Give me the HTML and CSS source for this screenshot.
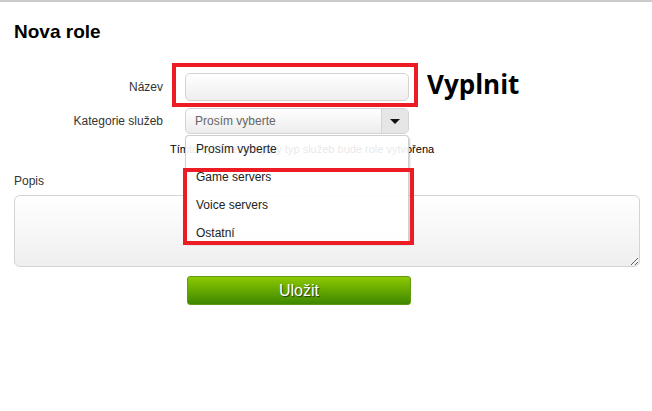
FILE: index.html
```html
<html>
    <head>
        <meta charset="utf-8">
        <link rel="stylesheet" href="styles.css">
    </head>
    <body>
        <div class="page">
            <h1 class="title">Nova role</h1>

            <div class="row row-name">
                <label class="label">Název</label>
                <div class="field">
                    <input type="text" class="input">
                    <div class="mark mark-name"></div>
                </div>
                <b class="note">Vyplnit</b>
            </div>

            <div class="row row-cat">
                <label class="label">Kategorie služeb</label>
                <div class="field">
                    <div class="select">
                        <span class="select-text">Prosím vyberte</span>
                        <span class="select-arrow"><i class="caret"></i></span>
                    </div>
                    <ul class="options">
                        <li>Prosím vyberte</li>
                        <li>Game servers</li>
                        <li>Voice servers</li>
                        <li>Ostatní</li>
                    </ul>
                    <div class="mark mark-list"></div>
                </div>
            </div>

            <p class="hint">Tímto vyberte, pro jaký typ služeb bude role vytvořena</p>

            <label class="label-top">Popis</label>
            <textarea class="textarea"></textarea>

            <div class="actions">
                <button class="btn">Uložit</button>
            </div>
        </div>
    </body>
</html>
```

FILE: styles.css
```css
*{
    box-sizing: border-box;
    font-family: "Liberation Sans", Arial, sans-serif;
}
body{
    margin: 0px;
    border-top: 2px solid #cbcbcb;
    background: #fff;
    color: #333;
    font-size: 12px;
}
.page{
    padding: 0px 12px 0px 14px;
}
.title{
    margin: 19px 0px 0px 0px;
    font-size: 19px;
    line-height: 22px;
    color: #000;
}
.row{
    display: grid;
    grid-template-columns: 149px 224px auto;
    column-gap: 22px;
    align-items: center;
}
.row-name{
    margin-top: 30px;
    height: 28px;
}
.row-cat{
    margin-top: 7px;
    height: 26px;
}
.label{
    text-align: right;
    font-size: 12px;
    color: #333;
}
.field{
    position: relative;
}
.input{
    display: block;
    width: 224px;
    height: 28px;
    border: 1px solid #d4d4d4;
    border-radius: 5px;
    background: linear-gradient(#ffffff, #eeeeee);
}
.note{
    margin-left: -4px;
    margin-top: -6px;
    font-family: "Open Sans", sans-serif;
    font-size: 26px;
    line-height: 28px;
    color: #000;
}
.mark{
    position: absolute;
    border: 4px solid #ed1c24;
}
.mark-name{
    left: -13px;
    right: -9px;
    top: -10px;
    bottom: -6px;
}
.select{
    display: flex;
    height: 26px;
    border: 1px solid #d4d4d4;
    border-radius: 5px;
    background: linear-gradient(#ffffff, #ececec);
    overflow: hidden;
}
.select-text{
    flex: 1;
    padding-left: 9px;
    line-height: 24px;
    color: #666;
}
.select-arrow{
    width: 27px;
    display: flex;
    align-items: center;
    justify-content: center;
    background: #e6e6e6;
    border-left: 1px solid #d4d4d4;
}
.caret{
    width: 0px;
    height: 0px;
    border-left: 5px solid transparent;
    border-right: 5px solid transparent;
    border-top: 5px solid #111;
}
.options{
    position: absolute;
    z-index: 2;
    left: 0px;
    top: 27px;
    width: 224px;
    height: 108px;
    margin: 0px;
    padding: 0px;
    list-style: none;
    overflow: hidden;
    background: rgba(255, 255, 255, 0.9);
    border: 1px solid #cfcfcf;
    border-bottom: none;
    border-radius: 4px 4px 0px 0px;
    box-shadow: 1px 2px 2px rgba(0, 0, 0, 0.2);
}
.options li{
    height: 28px;
    line-height: 28px;
    padding-left: 10px;
    color: #222;
}
.options li:first-child{
    height: 27px;
    line-height: 27px;
}
.mark-list{
    z-index: 3;
    left: -2px;
    width: 231px;
    top: 60px;
    height: 77px;
}
.hint{
    margin: 8px 0px 0px 156px;
    font-size: 11px;
    line-height: 14px;
    white-space: nowrap;
    color: #000;
}
.label-top{
    display: block;
    margin-top: 18px;
    font-size: 12px;
}
.textarea{
    display: block;
    width: 626px;
    height: 72px;
    margin-top: 7px;
    border: 1px solid #d4d4d4;
    border-radius: 6px;
    background: linear-gradient(#ffffff, #efefef);
}
.actions{
    padding-left: 173px;
    margin-top: 9px;
}
.btn{
    width: 224px;
    height: 29px;
    border: 1px solid #5f9a12;
    border-radius: 3px;
    background: linear-gradient(#8dc800, #3e8800);
    color: #fff;
    font-size: 16px;
    text-shadow: 1px 1px 1px rgba(0, 0, 0, 0.6);
}
```
